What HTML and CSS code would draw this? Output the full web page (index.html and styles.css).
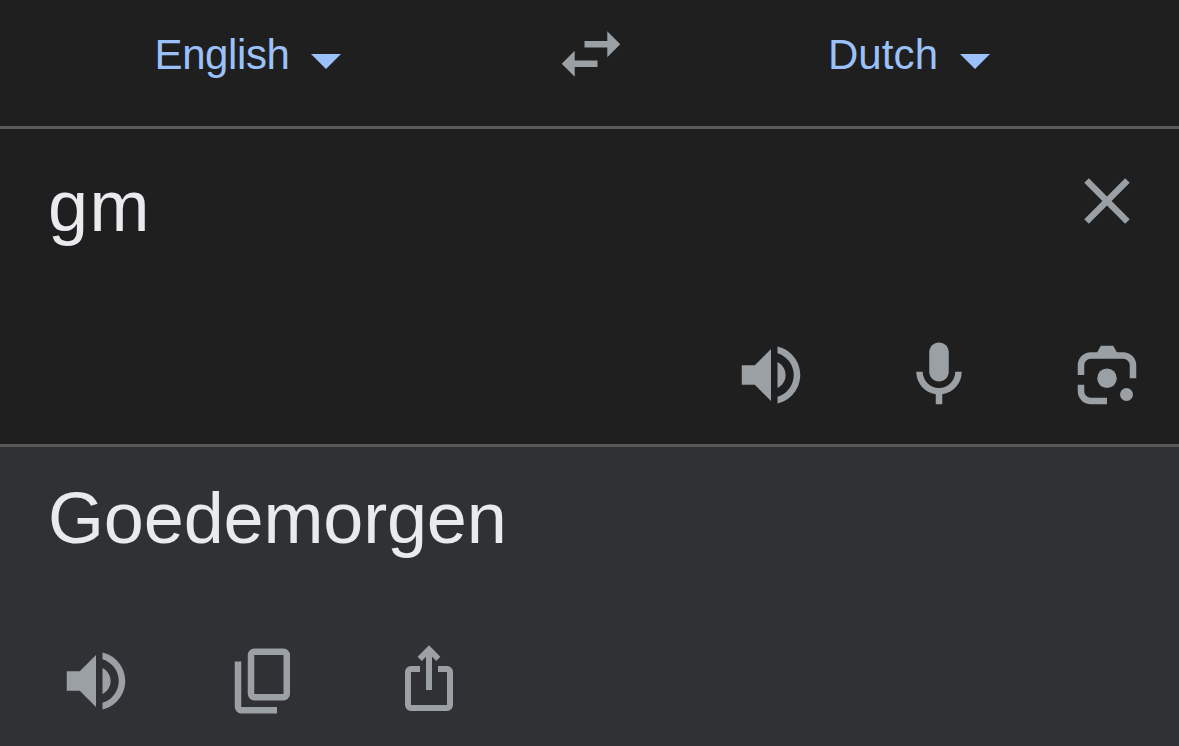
FILE: index.html
```
<!DOCTYPE html>
<html lang="en">
<head>
  <meta charset="UTF-8">
  <meta name="viewport" content="width=device-width, initial-scale=1.0">
  <title>Translate</title>
  <link rel="stylesheet" href="styles.css">
</head>
<body>

  <header class="languages">
    <button class="language">
      <span class="language-name english">English</span>
      <svg class="caret" viewBox="0 0 10 5"><path d="M0 0h10L5 5z"/></svg>
    </button>
    <button class="icon-button" aria-label="Swap languages">
      <svg class="icon" viewBox="0 0 24 24"><path d="M6.99 11L3 15l3.99 4v-3H14v-2H6.99v-3zM21 9l-3.99-4v3H10v2h7.01v3L21 9z"/></svg>
    </button>
    <button class="language">
      <span class="language-name dutch">Dutch</span>
      <svg class="caret" viewBox="0 0 10 5"><path d="M0 0h10L5 5z"/></svg>
    </button>
  </header>

  <section class="source">
    <div class="source-top">
      <div class="text query">gm</div>
      <button class="icon-button" aria-label="Clear">
        <svg class="icon" viewBox="0 0 24 24"><path d="M19 6.41L17.59 5 12 10.59 6.41 5 5 6.41 10.59 12 5 17.59 6.41 19 12 13.41 17.59 19 19 17.59 13.41 12z"/></svg>
      </button>
    </div>
    <div class="tools source-tools">
      <button class="icon-button" aria-label="Listen">
        <svg class="icon" viewBox="0 0 24 24"><path d="M3 9v6h4l5 5V4L7 9H3zm13.5 3c0-1.77-1.02-3.29-2.5-4.03v8.05c1.48-.73 2.5-2.25 2.5-4.02zM14 3.23v2.06c2.89.86 5 3.54 5 6.71s-2.11 5.85-5 6.71v2.06c4.01-.91 7-4.49 7-8.77s-2.99-7.86-7-8.77z"/></svg>
      </button>
      <button class="icon-button" aria-label="Speak">
        <svg class="icon" viewBox="0 0 24 24"><path d="M12 14c1.66 0 3-1.34 3-3V5c0-1.66-1.34-3-3-3S9 3.34 9 5v6c0 1.66 1.34 3 3 3z"/><path d="M17 11c0 2.76-2.24 5-5 5s-5-2.24-5-5H5c0 3.53 2.61 6.43 6 6.92V21h2v-3.08c3.39-.49 6-3.39 6-6.92h-2z"/></svg>
      </button>
      <button class="icon-button" aria-label="Camera">
        <svg class="icon" viewBox="0 0 24 24">
          <path class="line" d="M4 12V9a3 3 0 0 1 3-3h10a3 3 0 0 1 3 3v4M4 15v2a3 3 0 0 0 3 3h5"/>
          <path d="M8.8 5.3L10.1 3h3.8l1.3 2.3z"/>
          <circle cx="12" cy="13" r="3"/>
          <circle cx="18" cy="18" r="2"/>
        </svg>
      </button>
    </div>
  </section>

  <section class="target">
    <div class="text result">Goedemorgen</div>
    <div class="tools">
      <button class="icon-button" aria-label="Listen">
        <svg class="icon" viewBox="0 0 24 24"><path d="M3 9v6h4l5 5V4L7 9H3zm13.5 3c0-1.77-1.02-3.29-2.5-4.03v8.05c1.48-.73 2.5-2.25 2.5-4.02zM14 3.23v2.06c2.89.86 5 3.54 5 6.71s-2.11 5.85-5 6.71v2.06c4.01-.91 7-4.49 7-8.77s-2.99-7.86-7-8.77z"/></svg>
      </button>
      <button class="icon-button" aria-label="Copy">
        <svg class="icon" viewBox="0 0 24 24">
          <rect class="line" x="8" y="3" width="11" height="14" rx="1"/>
          <path class="line" d="M4 6v14a1 1 0 0 0 1 1h11"/>
        </svg>
      </button>
      <button class="icon-button" aria-label="Share">
        <svg class="icon" viewBox="0 0 26 26">
          <path class="line" d="M9 9H6a1 1 0 0 0-1 1v11a1 1 0 0 0 1 1h12a1 1 0 0 0 1-1V10a1 1 0 0 0-1-1h-3M12 16V2.8M8.9 5.6L12 2.5l3.1 3.1"/>
        </svg>
      </button>
    </div>
  </section>

</body>
</html>
```
FILE: styles.css
```
* {
  box-sizing: border-box;
}

body {
  font-family: "Helvetica Neue", "Liberation Sans", Arial, sans-serif;
  background: #1f1f1f;
  margin: 0;
  min-height: 100vh;
  display: flex;
  flex-direction: column;
  color: #e8eaed;
}

button {
  background: none;
  border: none;
  margin: 0;
  padding: 0;
  font: inherit;
  color: inherit;
  cursor: pointer;
}

.languages {
  display: grid;
  grid-template-columns: 496px 190px 446px;
  align-items: center;
  justify-items: center;
  height: 129px;
  padding-bottom: 18px;
  border-bottom: 3px solid #5a5a5b;
}

.language {
  display: flex;
  align-items: center;
  gap: 22px;
  color: #9bc1fb;
  font-size: 42px;
  line-height: 48px;
}

.language-name {
  padding-top: 2px;
}

.english {
  letter-spacing: -0.4px;
}

.dutch {
  letter-spacing: 0.1px;
}

.caret {
  width: 30px;
  height: 15px;
  margin-top: 14px;
  fill: currentColor;
}

.icon-button {
  width: 78px;
  height: 78px;
  color: #9aa0a4;
}

.icon {
  display: block;
  width: 78px;
  height: 78px;
  fill: currentColor;
}

.line {
  fill: none;
  stroke: currentColor;
  stroke-width: 2;
}

.text {
  font-size: 72px;
  line-height: 84px;
}

.query {
  letter-spacing: 1.5px;
}

.result {
  letter-spacing: -0.15px;
}

.source {
  display: flex;
  flex-direction: column;
  justify-content: space-between;
  height: 318px;
  padding: 33px 33px 30px 48px;
  border-bottom: 3px solid #58585a;
}

.source-top {
  display: flex;
  justify-content: space-between;
}

.source-top .text {
  padding-top: 2px;
}

.tools {
  display: flex;
  gap: 90px;
}

.source-tools {
  justify-content: flex-end;
}

.target {
  flex: 1;
  padding: 29px 48px 0 48px;
  background: #303134;
}

.target .tools {
  margin-top: 82px;
  padding-left: 9px;
}
```
